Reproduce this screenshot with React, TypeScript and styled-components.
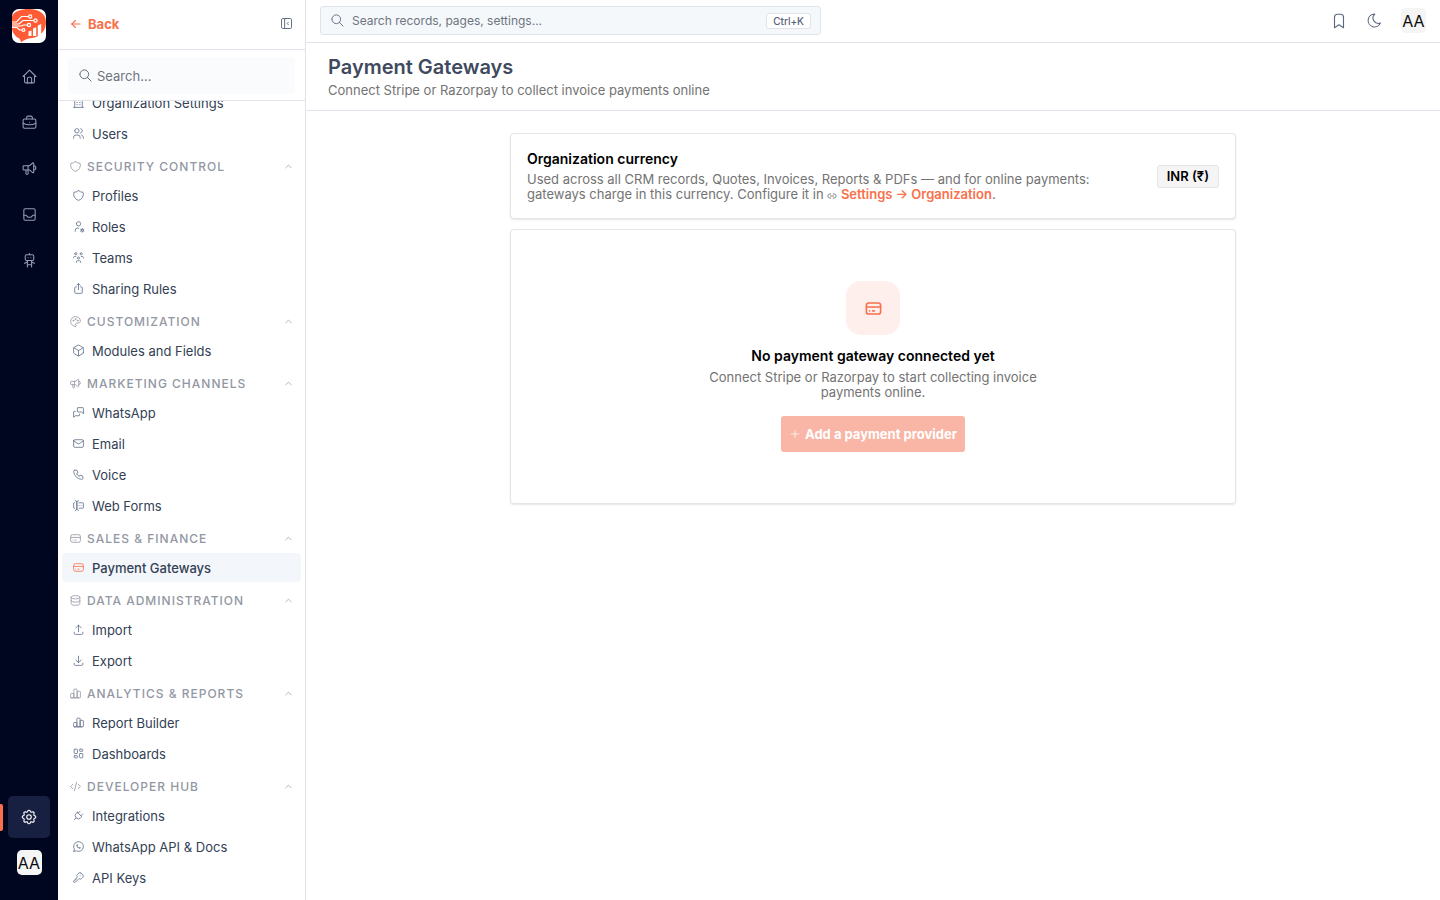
import React from "react";
import styled, { createGlobalStyle, css } from "styled-components";
import type { IconType } from "react-icons";
import { Link2 } from "lucide-react";
import {
  TbArrowLeft, TbBookmark, TbBrandWhatsapp, TbBriefcase, TbBuilding, TbChartBar, TbChevronUp, TbCode,
  TbCreditCard, TbCube, TbDatabase, TbDownload, TbForms, TbHome, TbInbox, TbKey, TbLayoutDashboard,
  TbLayoutSidebarLeftCollapse, TbMail, TbMessages, TbMoon, TbPalette, TbPhone, TbPlug, TbPlus,
  TbRobot, TbSearch, TbSettings, TbShare2, TbShield, TbSpeakerphone, TbUpload, TbUserCog, TbUsers,
  TbUsersGroup,
} from "react-icons/tb";

const accent = "#f9704a";
const line = "#e1e3ea";
const slate = "#334155";

const GlobalStyle = createGlobalStyle`
  *, *::before, *::after { box-sizing: border-box; }
  body { margin: 0; background: #fff; }
  body, button, input { font-family: Inter, "Noto Sans", sans-serif; }
  button { margin: 0; padding: 0; border: 0; background: none; cursor: pointer; }
  h1, h2, p, ul { margin: 0; padding: 0; }
  ul { list-style: none; }
  a { text-decoration: none; }
  svg { flex: none; }
  svg.tb { stroke-width: 1.5; }
`;

const Shell = styled.div`
  display: flex;
  height: 100vh;
  overflow: hidden;
`;

const Rail = styled.nav`
  display: flex;
  flex: none;
  flex-direction: column;
  align-items: center;
  width: 58px;
  padding: 9px 0 25px;
  background: #000620;
`;

const Logo = styled.a`
  display: block;
  width: 34px;
  height: 34px;
  margin-bottom: 12px;
  overflow: hidden;
  border-radius: 7px;
  background: #fff;
`;

const RailButton = styled.button<{ $active?: boolean }>`
  position: relative;
  display: grid;
  place-items: center;
  width: 42px;
  height: 42px;
  margin-bottom: 4px;
  border-radius: 5px;
  color: ${(p) => (p.$active ? "#fff" : "#949cb2")};
  background: ${(p) => (p.$active ? "#182041" : "transparent")};
  ${(p) => p.$active && css`
    margin-bottom: 12px;
    &::before {
      content: "";
      position: absolute;
      left: -8px;
      top: 8px;
      width: 3px;
      height: 27px;
      border-radius: 0 2px 2px 0;
      background: ${accent};
    }
  `}
`;

const Spacer = styled.div`
  flex: 1;
`;

const Avatar = styled.button`
  display: grid;
  place-items: center;
  width: 25px;
  height: 25px;
  border-radius: 5px;
  background: #f5f5f5;
  color: #0a0a0a;
  font-size: 16px;
  line-height: 24px;
`;

const Sidebar = styled.aside`
  display: flex;
  flex: none;
  flex-direction: column;
  width: 248px;
  border-right: 1px solid ${line};
`;

const SideTop = styled.div`
  display: flex;
  align-items: center;
  justify-content: space-between;
  height: 50px;
  padding: 0 11px 2px;
  border-bottom: 1px solid ${line};
`;

const Back = styled.a`
  display: flex;
  align-items: center;
  gap: 5px;
  color: ${accent};
  font-size: 13px;
  font-weight: 700;
`;

const Plain = styled.button`
  display: grid;
  place-items: center;
  color: #5b677f;
`;

const SideSearchWrap = styled.div`
  height: 51px;
  padding: 7px 10px 6px;
  border-bottom: 1px solid ${line};
`;

const SideSearch = styled.label`
  display: flex;
  align-items: center;
  gap: 4px;
  height: 37px;
  padding: 0 10px;
  border-radius: 4px;
  background: #f9fbfd;
  color: #5f6673;
`;

const Field = styled.input<{ $compact?: boolean }>`
  flex: 1;
  min-width: 0;
  padding: 0;
  border: 0;
  outline: 0;
  background: transparent;
  font-size: ${(p) => (p.$compact ? 12 : 13)}px;
  color: ${slate};
  &::placeholder { color: #6f7480; opacity: 1; }
`;

const SideScroll = styled.div`
  flex: 1;
  min-height: 0;
  overflow: hidden;
`;

const Groups = styled.div`
  display: flex;
  flex-direction: column;
  gap: 6px;
  margin-top: -13px;
  padding: 0 4px;
`;

const GroupButton = styled.button`
  display: flex;
  align-items: center;
  gap: 5px;
  width: 100%;
  height: 24px;
  margin-bottom: 3px;
  padding: 0 7px;
  color: #9297a3;
  font-size: 12px;
  font-weight: 500;
  letter-spacing: 1px;
  text-transform: uppercase;
  span { flex: 1; text-align: left; }
`;

const Items = styled.ul`
  display: flex;
  flex-direction: column;
  gap: 2px;
`;

const ItemLink = styled.a<{ $active?: boolean }>`
  display: flex;
  align-items: center;
  gap: 7px;
  height: 29px;
  padding: 0 10px;
  border-radius: 4px;
  color: ${slate};
  background: ${(p) => (p.$active ? "#f3f7fb" : "transparent")};
  font-size: 13px;
  font-weight: ${(p) => (p.$active ? 500 : 400)};
  svg { color: ${(p) => (p.$active ? accent : "#64708a")}; }
`;

const Main = styled.div`
  display: flex;
  flex: 1;
  flex-direction: column;
  min-width: 0;
`;

const TopBar = styled.header`
  display: flex;
  align-items: center;
  justify-content: space-between;
  height: 43px;
  padding: 0 14px 1px;
  border-bottom: 1px solid ${line};
`;

const GlobalSearch = styled.label`
  display: flex;
  align-items: center;
  gap: 7px;
  width: 501px;
  height: 29px;
  padding: 0 9px;
  border: 1px solid ${line};
  border-radius: 3px;
  background: #f4f8fb;
  color: #64708a;
`;

const Shortcut = styled.kbd`
  padding: 0 6px;
  border: 1px solid ${line};
  border-radius: 3px;
  background: #fff;
  color: #56627a;
  font-family: inherit;
  font-size: 10px;
  font-weight: 500;
  line-height: 14px;
`;

const TopActions = styled.div`
  display: flex;
  align-items: center;
  gap: 18px;
`;

const PageHead = styled.div`
  height: 68px;
  padding: 12px 22px;
  border-bottom: 1px solid ${line};
`;

const Title = styled.h1`
  color: #3f4a60;
  font-size: 20px;
  font-weight: 600;
  line-height: 24px;
`;

const Muted = styled.p`
  color: #737373;
  font-size: 13px;
  line-height: 15px;
`;

const PageNote = styled(Muted)`
  margin-top: 4px;
`;

const Content = styled.main`
  display: flex;
  flex-direction: column;
  gap: 10px;
  width: 100%;
  max-width: 726px;
  margin: 22px auto;
`;

const Card = styled.section`
  border: 1px solid #e5e5e5;
  border-radius: 4px;
  background: #fff;
  box-shadow: 0 1px 2px rgba(0, 0, 0, 0.1);
`;

const CurrencyCard = styled(Card)`
  display: flex;
  align-items: center;
  justify-content: space-between;
  gap: 60px;
  padding: 16px;
`;

const CardTitle = styled.h2`
  margin-bottom: 4px;
  color: #000;
  font-size: 14px;
  font-weight: 600;
  line-height: 18px;
`;

const InlineLink = styled.a`
  color: ${accent};
  font-weight: 600;
`;

const LinkGlyph = styled(Link2)`
  vertical-align: -2px;
`;

const Currency = styled.span`
  flex: none;
  padding: 0 9px;
  border: 1px solid #e5e5e5;
  border-radius: 3px;
  background: #f5f5f5;
  color: #000;
  font-size: 13px;
  font-weight: 600;
  line-height: 21px;
`;

const EmptyCard = styled(Card)`
  display: flex;
  flex-direction: column;
  align-items: center;
  padding: 51px 16px;
  text-align: center;
`;

const Badge = styled.div`
  display: grid;
  place-items: center;
  width: 54px;
  height: 54px;
  margin-bottom: 12px;
  border-radius: 15px;
  background: #feefec;
  color: ${accent};
`;

const EmptyTitle = styled(CardTitle)`
  margin-bottom: 5px;
`;

const EmptyText = styled(Muted)`
  max-width: 360px;
`;

const AddButton = styled.button`
  display: flex;
  align-items: center;
  gap: 4px;
  height: 36px;
  margin-top: 16px;
  padding: 0 8px;
  border-radius: 3px;
  background: #f9b5a5;
  color: #fff;
  font-size: 13px;
  font-weight: 700;
`;

type Entry = { label: string; icon: IconType; active?: boolean };
type Group = { title?: string; icon?: IconType; items: Entry[] };

const groups: Group[] = [
  { items: [{ label: "Organization Settings", icon: TbBuilding }, { label: "Users", icon: TbUsers }] },
  {
    title: "Security Control", icon: TbShield,
    items: [
      { label: "Profiles", icon: TbShield }, { label: "Roles", icon: TbUserCog },
      { label: "Teams", icon: TbUsersGroup }, { label: "Sharing Rules", icon: TbShare2 },
    ],
  },
  { title: "Customization", icon: TbPalette, items: [{ label: "Modules and Fields", icon: TbCube }] },
  {
    title: "Marketing Channels", icon: TbSpeakerphone,
    items: [
      { label: "WhatsApp", icon: TbMessages }, { label: "Email", icon: TbMail },
      { label: "Voice", icon: TbPhone }, { label: "Web Forms", icon: TbForms },
    ],
  },
  { title: "Sales & Finance", icon: TbCreditCard, items: [{ label: "Payment Gateways", icon: TbCreditCard, active: true }] },
  { title: "Data Administration", icon: TbDatabase, items: [{ label: "Import", icon: TbUpload }, { label: "Export", icon: TbDownload }] },
  { title: "Analytics & Reports", icon: TbChartBar, items: [{ label: "Report Builder", icon: TbChartBar }, { label: "Dashboards", icon: TbLayoutDashboard }] },
  {
    title: "Developer Hub", icon: TbCode,
    items: [
      { label: "Integrations", icon: TbPlug }, { label: "WhatsApp API & Docs", icon: TbBrandWhatsapp },
      { label: "API Keys", icon: TbKey },
    ],
  },
];

const railItems: Entry[] = [
  { label: "Home", icon: TbHome },
  { label: "Sales", icon: TbBriefcase },
  { label: "Marketing", icon: TbSpeakerphone },
  { label: "Inbox", icon: TbInbox },
  { label: "Agents", icon: TbRobot },
];

const LogoMark = () => (
  <svg width="34" height="34" viewBox="0 0 34 34" fill="none" aria-hidden="true">
    <path d="M0 7C3 2 9 0 17 0c10 0 17 5 17 13 0 9-6 15-14 16-5 .6-8 2-11 4.500-.3-2-.8-3.500-2.500-4.500C3 27 0 23 0 19z" fill="#ff5c35" />
    <g stroke="#fff" strokeWidth="1.200">
      <path d="M0 13h4.500l5-5.500h7M0 15h7l4-3.500h11M0 17h10l1-1h4.500M0 18.500h5l2.500 2.500h2.500" />
      <circle cx="18.200" cy="7.500" r="1.600" />
      <circle cx="23.500" cy="11.500" r="1.600" />
      <circle cx="17" cy="16" r="1.600" />
      <circle cx="11.500" cy="21" r="1.400" />
    </g>
    <path d="M16.500 22.500l3-1v5.500h-3zM21 19.500l3.200-1.200V27H21zM25.800 16.500l3.400-1.500v11l-3.400 1z" fill="#fff" />
  </svg>
);

const App = () => (
  <>
    <GlobalStyle />
    <Shell>
      <Rail aria-label="Main">
        <Logo href="#" aria-label="Dashboard"><LogoMark /></Logo>
        {railItems.map(({ label, icon: Icon }) => (
          <RailButton key={label} aria-label={label}><Icon className="tb" size={17} /></RailButton>
        ))}
        <Spacer />
        <RailButton $active aria-label="Settings"><TbSettings className="tb" size={18} /></RailButton>
        <Avatar>AA</Avatar>
      </Rail>
      <Sidebar>
        <SideTop>
          <Back href="#"><TbArrowLeft size={14} />Back</Back>
          <Plain aria-label="Collapse sidebar"><TbLayoutSidebarLeftCollapse className="tb" size={15} /></Plain>
        </SideTop>
        <SideSearchWrap>
          <SideSearch>
            <TbSearch className="tb" size={15} />
            <Field type="text" aria-label="Search settings" placeholder="Search..." />
          </SideSearch>
        </SideSearchWrap>
        <SideScroll>
          <Groups>
            {groups.map(({ title, icon: GroupIcon, items }) => (
              <div key={title ?? "general"}>
                {title && GroupIcon && (
                  <GroupButton aria-expanded="true">
                    <GroupIcon className="tb" size={13} />
                    <span>{title}</span>
                    <TbChevronUp className="tb" size={11} />
                  </GroupButton>
                )}
                <Items>
                  {items.map(({ label, icon: Icon, active }) => (
                    <li key={label}>
                      <ItemLink href="#" $active={active}><Icon className="tb" size={13} />{label}</ItemLink>
                    </li>
                  ))}
                </Items>
              </div>
            ))}
          </Groups>
        </SideScroll>
      </Sidebar>
      <Main>
        <TopBar>
          <GlobalSearch>
            <TbSearch className="tb" size={15} />
            <Field $compact type="text" aria-label="Search everything" placeholder="Search records, pages, settings..." />
            <Shortcut>Ctrl+K</Shortcut>
          </GlobalSearch>
          <TopActions>
            <Plain aria-label="Bookmarks"><TbBookmark className="tb" size={18} /></Plain>
            <Plain aria-label="Dark mode"><TbMoon className="tb" size={17} /></Plain>
            <Avatar>AA</Avatar>
          </TopActions>
        </TopBar>
        <PageHead>
          <Title>Payment Gateways</Title>
          <PageNote>Connect Stripe or Razorpay to collect invoice payments online</PageNote>
        </PageHead>
        <Content>
          <CurrencyCard>
            <div>
              <CardTitle>Organization currency</CardTitle>
              <Muted>
                Used across all CRM records, Quotes, Invoices, Reports &amp; PDFs — and for online payments:
                gateways charge in this currency. Configure it in <LinkGlyph size={10} />{" "}
                <InlineLink href="#">Settings → Organization</InlineLink>.
              </Muted>
            </div>
            <Currency>INR (₹)</Currency>
          </CurrencyCard>
          <EmptyCard>
            <Badge><TbCreditCard size={19} /></Badge>
            <EmptyTitle>No payment gateway connected yet</EmptyTitle>
            <EmptyText>Connect Stripe or Razorpay to start collecting invoice payments online.</EmptyText>
            <AddButton><TbPlus className="tb" size={12} />Add a payment provider</AddButton>
          </EmptyCard>
        </Content>
      </Main>
    </Shell>
  </>
);

export default App;
